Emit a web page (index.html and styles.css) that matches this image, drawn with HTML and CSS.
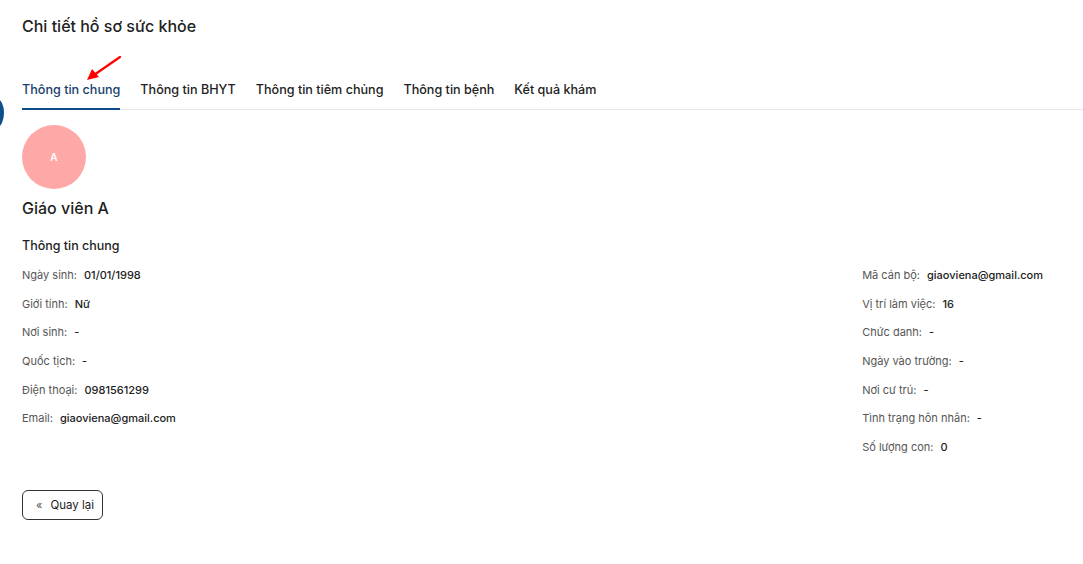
FILE: index.html
```html
<!DOCTYPE html>
<html lang="vi">
<head>
    <meta charset="UTF-8">
    <meta name="viewport" content="width=device-width, initial-scale=1.0">
    <title>Chi tiết hồ sơ sức khỏe</title>
    <link rel="stylesheet" href="styles.css">
</head>
<body>
    <span class="side-dot"></span>
    <div class="page">
        <h1 class="page-title">Chi tiết hồ sơ sức khỏe</h1>

        <div class="tabs">
            <a class="tab active">Thông tin chung</a>
            <a class="tab">Thông tin BHYT</a>
            <a class="tab">Thông tin tiêm chủng</a>
            <a class="tab">Thông tin bệnh</a>
            <a class="tab">Kết quả khám</a>
            <svg class="pointer" width="40" height="30" viewBox="0 0 40 30">
                <line x1="38" y1="2" x2="12" y2="20" stroke="#f00" stroke-width="2.2" stroke-linecap="round"/>
                <polygon points="5,25 10,14 17,22" fill="#f00"/>
            </svg>
        </div>

        <div class="avatar">A</div>
        <h2 class="name">Giáo viên A</h2>
        <h3 class="section-title">Thông tin chung</h3>

        <div class="info">
            <div class="col">
                <div class="row"><span class="label">Ngày sinh:</span><span class="value">01/01/1998</span></div>
                <div class="row"><span class="label">Giới tính:</span><span class="value">Nữ</span></div>
                <div class="row"><span class="label">Nơi sinh:</span><span class="value">-</span></div>
                <div class="row"><span class="label">Quốc tịch:</span><span class="value">-</span></div>
                <div class="row"><span class="label">Điện thoại:</span><span class="value">0981561299</span></div>
                <div class="row"><span class="label">Email:</span><span class="value">giaoviena@gmail.com</span></div>
            </div>
            <div class="col">
                <div class="row"><span class="label">Mã cán bộ:</span><span class="value">giaoviena@gmail.com</span></div>
                <div class="row"><span class="label">Vị trí làm việc:</span><span class="value">16</span></div>
                <div class="row"><span class="label">Chức danh:</span><span class="value">-</span></div>
                <div class="row"><span class="label">Ngày vào trường:</span><span class="value">-</span></div>
                <div class="row"><span class="label">Nơi cư trú:</span><span class="value">-</span></div>
                <div class="row"><span class="label">Tình trạng hôn nhân:</span><span class="value">-</span></div>
                <div class="row"><span class="label">Số lượng con:</span><span class="value">0</span></div>
            </div>
        </div>

        <button class="back-btn" type="button"><span class="back-icon">«</span>Quay lại</button>
    </div>
</body>
</html>
```

FILE: styles.css
```css
body { margin: 0; font-family: Inter, "Noto Sans", sans-serif; color: #1f1f1f; background: #fff; }
.side-dot { position: absolute; left: -10px; top: 99px; width: 14px; height: 28px; border-radius: 50%; background: #0d4f8b; }
.page { padding: 16px 40px 40px 22px; }
.page-title { margin: 0; font-size: 16px; font-weight: 500; line-height: 20px; color: #222; }
.tabs { position: relative; display: flex; gap: 20px; margin: 34px -40px 0 0; border-bottom: 1px solid #e5e5ea; }
.tab { padding: 10px 0 9px; font-size: 12.6px; font-weight: 500; line-height: 19px; color: #222; border-bottom: 2px solid transparent; margin-bottom: -1px; cursor: pointer; }
.tab.active { color: #17406d; border-bottom-color: #0c4a8a; }
.pointer { position: absolute; left: 60px; top: -15px; }
.avatar { width: 64px; height: 64px; margin-top: 15px; border-radius: 50%; background: #ffa8a8; color: #fff; font-size: 10px; font-weight: 600; display: flex; align-items: center; justify-content: center; }
.name { margin: 9px 0 0; font-size: 16px; font-weight: 500; line-height: 20px; }
.section-title { margin: 20px 0 0; font-size: 12.5px; font-weight: 500; line-height: 16px; }
.info { display: flex; justify-content: space-between; margin-top: 14px; }
.col { display: flex; flex-direction: column; gap: 14.7px; }
.row { display: flex; gap: 7px; font-size: 11px; line-height: 14px; }
.label { color: #555; }
.value { color: #222; font-weight: 500; }
.back-btn { margin-top: 36px; height: 30px; padding: 0 8px 0 13px; display: flex; align-items: center; gap: 8px; background: #fff; border: 1px solid #333; border-radius: 6px; font-family: inherit; font-size: 11.5px; color: #222; }
.back-icon { font-size: 11px; color: #555; }
```
